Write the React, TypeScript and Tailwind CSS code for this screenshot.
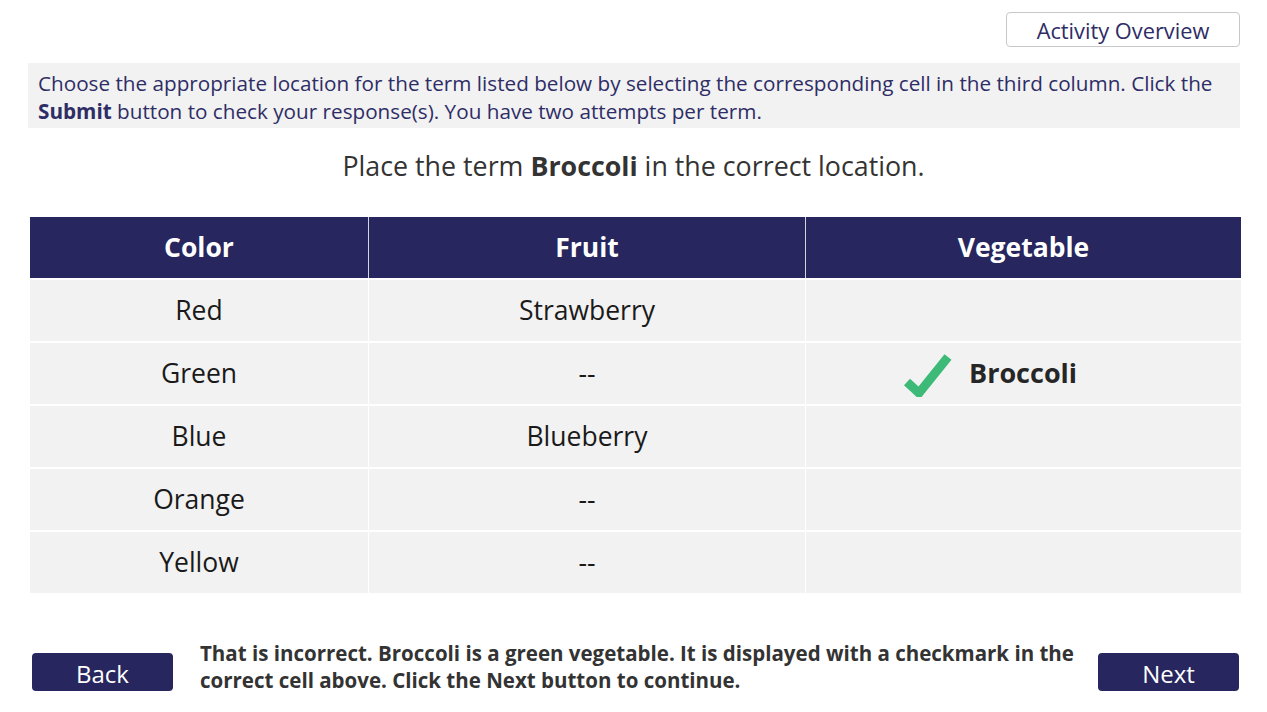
import React from 'react';

const rows = [
  { color: 'Red', fruit: 'Strawberry', veg: '' },
  { color: 'Green', fruit: '--', veg: 'Broccoli' },
  { color: 'Blue', fruit: 'Blueberry', veg: '' },
  { color: 'Orange', fruit: '--', veg: '' },
  { color: 'Yellow', fruit: '--', veg: '' },
];

function Check() {
  return (
    <svg width="50" height="46" viewBox="0 0 50 46" className="mr-[16px]">
      <polyline points="4,31 16,42 45,6" fill="none" stroke="#3dba78" strokeWidth="9" strokeLinecap="butt" strokeLinejoin="miter" />
    </svg>
  );
}

export default function App() {
  return (
    <div className="w-[1267px] h-[712px] bg-white font-['Open_Sans',sans-serif] flex flex-col">
      {/* Top bar */}
      <div className="flex justify-end pt-[12px] pr-[27px]">
        <button className="w-[234px] h-[35px] border border-[#c8c8c8] rounded-[4px] bg-white text-[#2e2d66] text-[21.8px] leading-none pt-[3px]">
          Activity Overview
        </button>
      </div>

      {/* Instructions */}
      <div className="mt-[16px] ml-[28px] w-[1212px] h-[65px] bg-[#f2f2f2] px-[10px] pt-[6px] text-[20.7px] leading-[28px] text-[#2e2d66]">
        Choose the appropriate location for the term listed below by selecting the corresponding cell in the third column. Click the{' '}
        <b>Submit</b> button to check your response(s). You have two attempts per term.
      </div>

      <div className="mt-[20px] text-center text-[26.8px] leading-[36px] text-[#333333]">
        Place the term <b>Broccoli</b> in the correct location.
      </div>

      {/* Table */}
      <div className="mt-[33px] ml-[30px] w-[1211px]">
        <div className="grid grid-cols-[339px_437px_435px] h-[61px] bg-[#27265e] text-white font-bold text-[26.5px]">
          <div className="flex items-center justify-center border-r border-white/80">Color</div>
          <div className="flex items-center justify-center border-r border-white/80">Fruit</div>
          <div className="flex items-center justify-center">Vegetable</div>
        </div>
        {rows.map((r) => (
          <div key={r.color} className="grid grid-cols-[339px_437px_435px] h-[63px] bg-[#f2f2f2] border-t-2 border-white text-[26.5px] text-[#1a1a1a]">
            <div className="flex items-center justify-center border-r border-white">{r.color}</div>
            <div className="flex items-center justify-center border-r border-white">{r.fruit}</div>
            <div className="flex items-center pl-[97px]">
              {r.veg && (
                <>
                  <Check />
                  <span className="font-bold text-[27px] text-[#262626]">{r.veg}</span>
                </>
              )}
            </div>
          </div>
        ))}
      </div>

      {/* Footer */}
      <div className="mt-[47px] flex items-start px-[28px]">
        <button className="mt-[13px] ml-[4px] w-[141px] h-[38px] rounded-[4px] bg-[#27265e] text-white text-[24px] leading-none pt-[4px]">
          Back
        </button>
        <div className="ml-[27px] w-[895px] font-bold text-[20.5px] leading-[27px] text-[#333333]">
          That is incorrect. Broccoli is a green vegetable. It is displayed with a checkmark in the correct cell above. Click the Next button to continue.
        </div>
        <button className="mt-[13px] ml-auto w-[141px] h-[38px] rounded-[4px] bg-[#27265e] text-white text-[24px] leading-none pt-[4px]">
          Next
        </button>
      </div>
    </div>
  );
}
